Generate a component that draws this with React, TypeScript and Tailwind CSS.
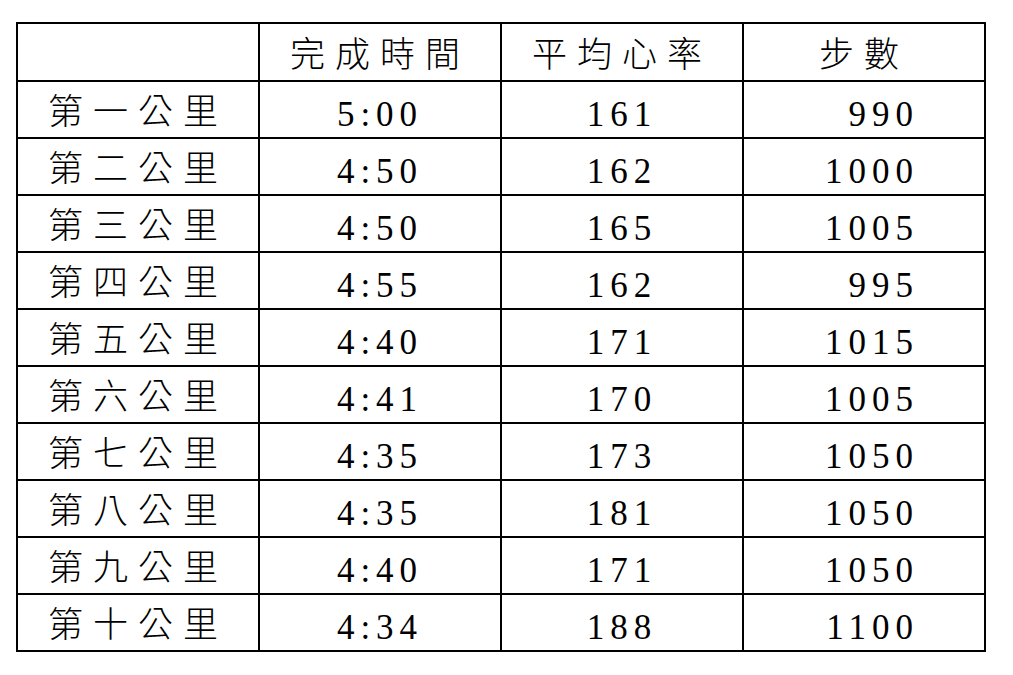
const rows = [
  ["第一公里", "5:00", "161", "990"],
  ["第二公里", "4:50", "162", "1000"],
  ["第三公里", "4:50", "165", "1005"],
  ["第四公里", "4:55", "162", "995"],
  ["第五公里", "4:40", "171", "1015"],
  ["第六公里", "4:41", "170", "1005"],
  ["第七公里", "4:35", "173", "1050"],
  ["第八公里", "4:35", "181", "1050"],
  ["第九公里", "4:40", "171", "1050"],
  ["第十公里", "4:34", "188", "1100"],
];

export default function App() {
  return (
    <div className="w-[1013px] h-[675px] bg-white pt-[22px] pl-[16px]">
      <table className="w-[970px] table-fixed border-collapse border-2 border-black text-black">
        <thead>
          <tr className="h-[58px]">
            <th className="border-2 border-black"></th>
            <th className="border-2 border-black text-center font-['Noto_Sans_CJK_TC'] text-[35px] tracking-[10px] font-light">
              完成時間
            </th>
            <th className="border-2 border-black text-center font-['Noto_Sans_CJK_TC'] text-[35px] tracking-[10px] font-light">
              平均心率
            </th>
            <th className="border-2 border-black text-center font-['Noto_Sans_CJK_TC'] text-[35px] tracking-[10px] font-light">
              步數
            </th>
          </tr>
        </thead>
        <tbody>
          {rows.map((r) => (
            <tr key={r[0]} className="h-[57px]">
              <td className="border-2 border-black text-center leading-none pb-[3px] font-['Noto_Sans_CJK_TC'] text-[35px] tracking-[10px] font-light">
                {r[0]}
              </td>
              <td className="border-2 border-black text-center leading-none pt-[10px] font-['Liberation_Serif'] text-[35px] tracking-[6px]">
                {r[1]}
              </td>
              <td className="border-2 border-black text-center leading-none pt-[10px] font-['Liberation_Serif'] text-[35px] tracking-[6px]">
                {r[2]}
              </td>
              <td className="border-2 border-black text-right pr-[65px] leading-none pt-[10px] font-['Liberation_Serif'] text-[35px] tracking-[6px]">
                {r[3]}
              </td>
            </tr>
          ))}
        </tbody>
      </table>
    </div>
  );
}
